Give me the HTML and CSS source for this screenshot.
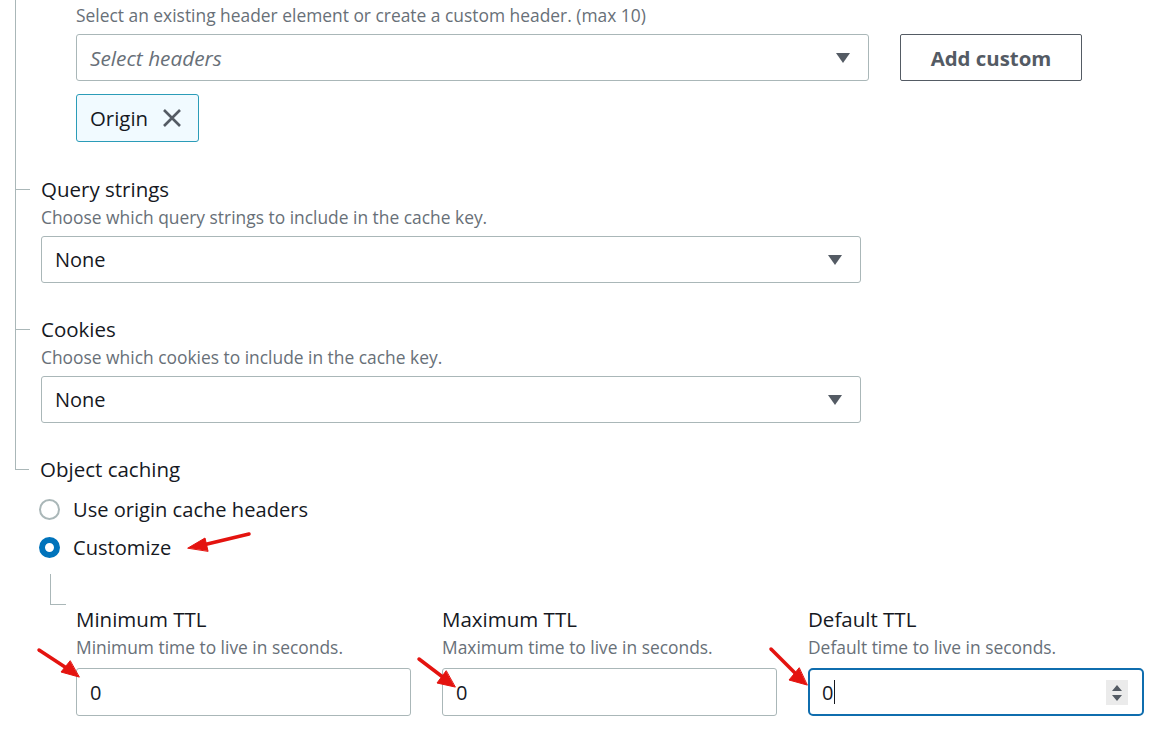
FILE: index.html
```html
<!DOCTYPE html>
<html lang="en">
<head>
<meta charset="utf-8">
<title>Cache key settings</title>
<link rel="stylesheet" href="styles.css">
</head>
<body>
<div class="page">
  <div class="tree">
    <div class="branch branch-cont headers-section">
      <p class="desc">Select an existing header element or create a custom header. (max 10)</p>
      <div class="header-row">
        <div class="select select-wide">
          <span class="placeholder">Select headers</span>
          <svg class="caret" width="14" height="10" viewBox="0 0 14 10"><path d="M0 0H14L7 10Z" fill="#545b64"/></svg>
        </div>
        <button class="btn">Add custom</button>
      </div>
      <div class="tag">
        <span>Origin</span>
        <svg width="20" height="20" viewBox="0 0 20 20"><path d="M2 2L18 18M18 2L2 18" stroke="#545b64" stroke-width="2.6" fill="none"/></svg>
      </div>
    </div>

    <div class="branch branch-mid">
      <label class="label">Query strings</label>
      <p class="desc">Choose which query strings to include in the cache key.</p>
      <div class="select select-mid">
        <span class="value">None</span>
        <svg class="caret" width="14" height="10" viewBox="0 0 14 10"><path d="M0 0H14L7 10Z" fill="#545b64"/></svg>
      </div>
    </div>

    <div class="branch branch-mid">
      <label class="label">Cookies</label>
      <p class="desc">Choose which cookies to include in the cache key.</p>
      <div class="select select-mid">
        <span class="value">None</span>
        <svg class="caret" width="14" height="10" viewBox="0 0 14 10"><path d="M0 0H14L7 10Z" fill="#545b64"/></svg>
      </div>
    </div>

    <div class="branch branch-last">
      <label class="label">Object caching</label>
      <div class="radios">
        <div class="radio-row"><span class="radio"></span><span>Use origin cache headers</span></div>
        <div class="radio-row"><span class="radio radio-on"></span><span>Customize</span></div>
      </div>
      <div class="subtree">
        <div class="ttl-grid">
          <div class="ttl">
            <label class="label">Minimum TTL</label>
            <p class="desc">Minimum time to live in seconds.</p>
            <div class="input"><span class="value">0</span></div>
          </div>
          <div class="ttl">
            <label class="label">Maximum TTL</label>
            <p class="desc">Maximum time to live in seconds.</p>
            <div class="input"><span class="value">0</span></div>
          </div>
          <div class="ttl">
            <label class="label">Default TTL</label>
            <p class="desc">Default time to live in seconds.</p>
            <div class="input input-focus"><span class="value">0</span><span class="cursor"></span>
              <span class="spinner">
                <svg width="12" height="18" viewBox="0 0 12 18"><path d="M1 7L6 1L11 7Z M1 11L6 17L11 11Z" fill="#545b64"/></svg>
              </span>
            </div>
          </div>
        </div>
      </div>
    </div>
  </div>
</div>

<svg class="arrows" width="1160" height="736" viewBox="0 0 1160 736">
  <g stroke="#e4130f" stroke-width="3.5" stroke-linecap="round" fill="#e4130f">
    <line x1="249" y1="534" x2="203" y2="545"/>
    <polygon points="188,548 205,538 208,551" stroke-width="1"/>
    <line x1="39" y1="650" x2="68" y2="669"/>
    <polygon points="79,677 61,672 70,661" stroke-width="1"/>
    <line x1="419" y1="659" x2="444" y2="678"/>
    <polygon points="455,687 437,683 446,671" stroke-width="1"/>
    <line x1="771" y1="649" x2="796" y2="674"/>
    <polygon points="807,685 789,680 799,668" stroke-width="1"/>
  </g>
</svg>
</body>
</html>
```
FILE: styles.css
```css
* { box-sizing: border-box; }
html, body { margin: 0; padding: 0; background: #fff; }
body {
  font-family: "Open Sans", "Noto Sans", sans-serif;
  color: #16191f;
  width: 1160px;
  height: 736px;
  overflow: hidden;
  position: relative;
}
p { margin: 0; }
.page { padding-left: 15px; }
.tree { display: flex; flex-direction: column; }

.branch { position: relative; padding-left: 25px; }
.branch-cont { border-left: 1px solid #aab7b8; padding-left: 60px; padding-bottom: 33px; padding-top: 1px; }
.branch-mid { border-left: 1px solid #aab7b8; padding-bottom: 32px; }
.branch-mid::before, .branch-last::before {
  content: "";
  position: absolute;
  left: 0;
  top: 14px;
  width: 14px;
  border-top: 1px solid #aab7b8;
}
.branch-last { padding-left: 25px; }
.branch-last::after {
  content: "";
  position: absolute;
  left: 0;
  top: 0;
  height: 14px;
  border-left: 1px solid #aab7b8;
}

.label { display: block; font-size: 20.5px; line-height: 28px; color: #16191f; }
.desc { font-size: 17.4px; line-height: 28px; color: #687078; margin-bottom: 5px; }
.headers-section .desc { margin-bottom: 5px; }

.header-row { display: flex; gap: 31px; align-items: center; }
.select {
  height: 47px;
  border: 1px solid #aab7b8;
  border-radius: 3px;
  display: flex;
  align-items: center;
  justify-content: space-between;
  padding: 0 18px 0 13px;
  font-size: 20px;
}
.select-wide { width: 793px; }
.select-mid { width: 820px; }
.caret { display: block; margin-top: 1px; }
.placeholder { font-style: italic; color: #687078; font-size: 20.8px; }
.value { color: #16191f; font-size: 20px; }

.btn {
  width: 182px;
  height: 47px;
  border: 1px solid #545b64;
  border-radius: 2px;
  background: #fff;
  font-family: inherit;
  font-weight: 700;
  font-size: 20.4px;
  color: #545b64;
  padding: 0;
}

.tag {
  margin-top: 13px;
  width: 123px;
  height: 48px;
  border: 1px solid #2b9cb8;
  border-radius: 3px;
  background: #f1faff;
  display: flex;
  align-items: center;
  padding-left: 13px;
  gap: 14px;
  font-size: 20.4px;
}
.tag svg { display: block; }

.radios { margin-top: 7px; display: flex; flex-direction: column; }
.radio-row { height: 38px; display: flex; align-items: center; gap: 13px; font-size: 20.1px; margin-left: -1px; }
.radio {
  width: 21px; height: 21px; border-radius: 50%;
  border: 2px solid #aab7b8; background: #fff;
  flex: none;
}
.radio-on { border: 6.5px solid #0073bb; }

.subtree { position: relative; padding-left: 36px; padding-top: 39px; }
.subtree::before {
  content: "";
  position: absolute;
  left: 10px;
  top: 8px;
  height: 30px;
  width: 15px;
  border-left: 1px solid #aab7b8;
  border-bottom: 1px solid #aab7b8;
}
.ttl-grid { display: grid; grid-template-columns: 335px 335px 336px; gap: 31px; }
.ttl .desc { margin-bottom: 7px; }
.input {
  height: 48px;
  border: 1px solid #aab7b8;
  border-radius: 3px;
  display: flex;
  align-items: center;
  padding-left: 13px;
  position: relative;
}
.input-focus { border: 2px solid #0f6dae; border-radius: 5px; padding-left: 12px; }
.cursor { display: inline-block; width: 1px; height: 24px; background: #16191f; margin-left: 1px; }
.spinner {
  position: absolute;
  right: 14px;
  top: 10px;
  width: 22px;
  height: 25px;
  background: #ebebeb;
  display: flex;
  align-items: center;
  justify-content: center;
}
.spinner svg { display: block; }

.arrows { position: absolute; left: 0; top: 0; pointer-events: none; }
```
